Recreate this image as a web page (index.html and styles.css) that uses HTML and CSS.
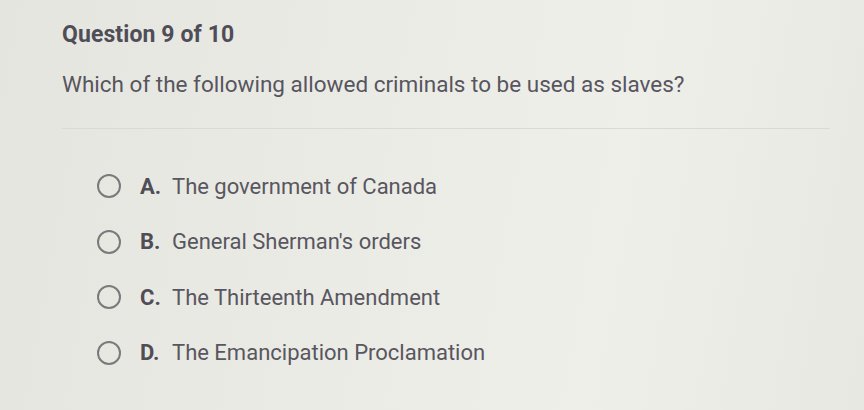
FILE: index.html
```html
<!DOCTYPE html>
<html>
<head>
<meta charset="utf-8">
<link rel="stylesheet" href="styles.css">
</head>
<body>
<div class="page">
  <h1 class="title">Question 9 of 10</h1>
  <p class="prompt">Which of the following allowed criminals to be used as slaves?</p>
  <hr class="divider">
  <ul class="options">
    <li class="option"><span class="radio"></span><span class="letter">A.</span><span class="answer">The government of Canada</span></li>
    <li class="option"><span class="radio"></span><span class="letter">B.</span><span class="answer">General Sherman's orders</span></li>
    <li class="option"><span class="radio"></span><span class="letter">C.</span><span class="answer">The Thirteenth Amendment</span></li>
    <li class="option"><span class="radio"></span><span class="letter">D.</span><span class="answer">The Emancipation Proclamation</span></li>
  </ul>
</div>
</body>
</html>
```
FILE: styles.css
```css
html, body {
  margin: 0;
  padding: 0;
}
body {
  width: 864px;
  height: 410px;
  overflow: hidden;
  font-family: Roboto, "Liberation Sans", sans-serif;
  background: linear-gradient(100deg, #e5e5df 0%, #ebebe6 40%, #efefea 70%, #e8e8e2 100%);
  color: #5a5860;
}
.page {
  padding: 22px 34px 0 62px;
  display: flex;
  flex-direction: column;
}
.title {
  margin: 0;
  font-size: 23px;
  font-weight: 700;
  line-height: 26px;
  letter-spacing: 0.1px;
  color: #4f4d57;
}
.prompt {
  margin: 22px 0 0 0;
  font-size: 22.5px;
  line-height: 28px;
  color: #57555e;
}
.divider {
  margin: 30px 0 0 0;
  border: 0;
  height: 1px;
  background: #dadad4;
}
.options {
  list-style: none;
  margin: 44px 0 0 35px;
  padding: 0;
  display: flex;
  flex-direction: column;
  gap: 29.5px;
}
.option {
  display: flex;
  align-items: center;
  height: 26px;
  font-size: 22px;
  color: #58565e;
}
.radio {
  box-sizing: border-box;
  width: 24px;
  height: 24px;
  border: 2px solid #7a7a7c;
  border-radius: 50%;
  margin-right: 19px;
}
.letter {
  font-weight: 700;
  width: 32px;
  color: #4f4d57;
}
```
